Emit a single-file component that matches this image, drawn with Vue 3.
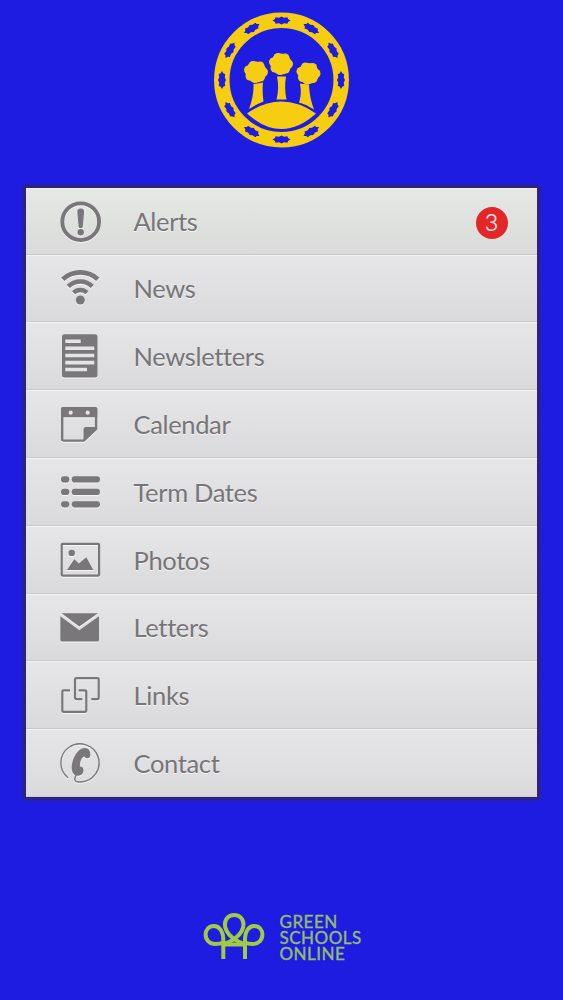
<template>
  <div class="screen">
    <header class="crest">
      <svg viewBox="0 0 136 136" width="136" height="136">
        <circle class="crest-ring" cx="67.500" cy="68" r="59.700" />
        <path
          v-for="n in 12"
          :key="n"
          class="crest-mark"
          :transform="`rotate(${n * 30} 67.5 68) translate(67.5 8.5)`"
          d="M-9 0L-6.500-1.500L-6-3.200L-2.500-2.800L0-4L2.500-2.800L6-3.200L6.500-1.500L9 0L6.500 1.500L6 3.200L2.500 2.800L0 4L-2.500 2.800L-6 3.200L-6.500 1.500z"
        />
        <g class="crest-fill">
          <path d="M33 101.500Q50 89.500 67 89.500Q85 89.500 102 101.500Q85 117 67.500 117Q50 117 33 101.500z" />
          <path d="M39.500 72L49 70.500Q48 80 49.500 89.500Q42 92.500 35 97Q40 84 39.500 72z" />
          <path d="M63 64.500H72Q70 76 72.500 87.500H62.500Q65.500 76 63 64.500z" />
          <path d="M86 71.500L95 72.500Q95.500 86 100 97.500Q93 92.500 85 90.500Q88 82 86 71.500z" />
          <g v-for="tree in trees" :key="tree.x" :transform="`translate(${tree.x} ${tree.y})`">
            <circle r="10.500" />
            <circle cx="-7.500" cy="-2" r="4.500" />
            <circle cx="-3" cy="-6.500" r="4.500" />
            <circle cx="4" cy="-6" r="4.500" />
            <circle cx="7.500" cy="0" r="4.500" />
            <circle cx="-6" cy="4" r="4.500" />
            <circle cx="4.500" cy="5" r="4.500" />
            <circle cx="-1" cy="6.500" r="4.500" />
          </g>
        </g>
      </svg>
    </header>

    <ul class="menu">
      <li v-for="item in items" :key="item.label" class="menu-item" :class="{ first: item.count }">
        <svg class="icon" viewBox="0 0 48 48" width="48" height="48">
          <g v-if="item.icon === 'alert'">
            <circle class="line" cx="24.700" cy="24.700" r="18.400" stroke-width="3.800" />
            <path d="M21.300 14.800a3.400 3.400 0 0 1 6.800 0L26.900 29a2.200 2.200 0 0 1-4.400 0z" />
            <circle cx="24.700" cy="35.300" r="3.200" />
          </g>
          <g v-else-if="item.icon === 'wifi'">
            <circle cx="24.300" cy="36" r="4.500" />
            <path class="line" stroke-width="4.800" d="M6.800 15.300a25.500 25.500 0 0 1 35 0" />
            <path class="line" stroke-width="4.600" d="M12.300 22.400a17 17 0 0 1 24 0" />
            <path class="line" stroke-width="4.400" d="M17.600 28.800a9.500 9.500 0 0 1 13.400 0" />
          </g>
          <g v-else-if="item.icon === 'page'">
            <rect x="6" y="2.200" width="35.500" height="43.200" rx="2.500" />
            <path class="cut" stroke-width="3.600" d="M9.300 9.200h15.400M9.300 16.200h29M9.300 23.500h29M9.300 30.600h29M9.300 37.500h21.700" />
          </g>
          <g v-else-if="item.icon === 'calendar'">
            <path class="line" stroke-width="2.400" d="M6.200 9v30.400a1.200 1.200 0 0 0 1.200 1.200h20.400L40.100 29V9" />
            <path d="M5 17.200V8.500q0-1.500 1.500-1.500h33.300q1.500 0 1.500 1.500v8.700z" />
            <path d="M27.500 41V29.500q0-2.500 2.500-2.500h11v2.500z" />
            <circle class="hole" cx="14.700" cy="12.700" r="2.100" />
            <circle class="hole" cx="31.700" cy="12.700" r="2.100" />
          </g>
          <g v-else-if="item.icon === 'list'">
            <template v-for="y in [8.3, 20.8, 33.2]" :key="y">
              <rect x="5" :y="y" width="8.300" height="6.200" rx="3.100" />
              <rect x="15.700" :y="y" width="28.300" height="6.200" rx="3.100" />
            </template>
          </g>
          <g v-else-if="item.icon === 'photo'">
            <rect class="line" x="5.700" y="7.900" width="37.400" height="31.700" rx="1" stroke-width="2.200" />
            <circle cx="15.700" cy="16.900" r="3.200" />
            <path d="M11 33.900L18.300 23.300L22.900 27.600L30.300 21.200L37.300 33.900z" />
          </g>
          <g v-else-if="item.icon === 'mail'">
            <path d="M5.500 10.200H42L23.300 23.600z" />
            <path d="M4.300 13.300L23.300 27.300L43 13.300V37q0 1.600-1.600 1.600H5.900Q4.300 38.600 4.300 37z" />
          </g>
          <g v-else-if="item.icon === 'links'">
            <path class="line" stroke-width="2.200" d="M26.300 28.100H20.500q-1.500 0-1.500-1.500v-18q0-1.500 1.500-1.500h20.700q1.500 0 1.500 1.500v18q0 1.500-1.500 1.500h-5.900" />
            <path class="line" stroke-width="2.200" d="M14 19.400H7.800q-1.500 0-1.500 1.500v18.400q0 1.500 1.500 1.500h21q1.500 0 1.500-1.500V20.900q0-1.500-1.500-1.500h-6.200" />
          </g>
          <g v-else>
            <path class="line" stroke-width="1.400" d="M12 38.800A19.100 19.100 0 1 1 24.500 43Q18.500 43.500 18.800 39.500L20.500 35" />
            <path d="M22 12.500C24.500 9.500 28.500 8.300 31.500 9.700C34 11 34.700 14.500 34.200 17C33.500 20 29.500 19.800 28 17.200C25 19 23.500 24 24 27.500C27.500 27.500 28.200 31 26.800 34C25.500 36.800 21.500 37.300 18.800 36C15.500 34 15.300 29 16 25C17 20 19 15.500 22 12.500z" />
          </g>
        </svg>
        <span class="label">{{ item.label }}</span>
        <span v-if="item.count" class="badge">{{ item.count }}</span>
      </li>
    </ul>

    <footer class="brand">
      <svg viewBox="0 0 62 48" width="62" height="48">
        <g class="brand-lines">
          <path d="M20.300 47V28C20.300 19 16 14 10.800 14C5.800 14 2.600 17.800 2.600 22.600C2.600 28 6.500 32 12.500 32C15.500 32 18 31.500 20.300 30.500" />
          <path d="M42 47V28C42 19 46 14 51.200 14C56.200 14 59.400 17.800 59.400 22.600C59.400 28 55.500 32 49.500 32C46.500 32 44 31.500 42 30.500" />
          <path d="M18 32C28.500 31 40.500 22 40.500 12.500C40.500 7 36.500 3 31.200 3C25.900 3 21.900 7 21.900 12.500C21.900 22 34 31 44 32" />
          <path d="M20 32.500H42" />
        </g>
      </svg>
      <div class="brand-name">
        <span>GREEN</span>
        <span>SCHOOLS</span>
        <span>ONLINE</span>
      </div>
    </footer>
  </div>
</template>

<script setup>
const items = [
  { label: "Alerts", icon: "alert", count: 3 },
  { label: "News", icon: "wifi" },
  { label: "Newsletters", icon: "page" },
  { label: "Calendar", icon: "calendar" },
  { label: "Term Dates", icon: "list" },
  { label: "Photos", icon: "photo" },
  { label: "Letters", icon: "mail" },
  { label: "Links", icon: "links" },
  { label: "Contact", icon: "phone" },
];

const trees = [
  { x: 42, y: 60 },
  { x: 67, y: 52 },
  { x: 94.5, y: 61.5 },
];
</script>

<style>
body {
  background: #1f1ce2;
}
</style>

<style scoped>
.screen {
  box-sizing: border-box;
  height: 1000px;
  padding: 12px 26px 0;
  overflow: hidden;
  background: #1f1ce2;
  font-family: Lato, sans-serif;
}

.crest {
  display: flex;
  justify-content: center;
  height: 176px;
}
.crest-ring {
  fill: none;
  stroke: #f7cd12;
  stroke-width: 15.500;
}
.crest-mark {
  fill: #1f1ce2;
}
.crest-fill {
  fill: #f7cd12;
}

.menu {
  width: 510.500px;
  margin: 0;
  padding: 0;
  list-style: none;
  border-radius: 1px;
  box-shadow: 0 0 3px 3px #30266f;
}
.menu-item {
  box-sizing: border-box;
  display: flex;
  align-items: center;
  height: 67.800px;
  padding: 0 29px 0 30px;
  border-top: 1px solid #f3f3f4;
  border-bottom: 1px solid #c9c9cb;
  background: linear-gradient(#e6e5e7, #dad9db);
}
.menu-item.first {
  height: 66.600px;
  background: linear-gradient(#e5e8e4, #dadbda);
}
.icon {
  flex: none;
  fill: #79777a;
  filter: drop-shadow(0 1px 0 #f5f5f5);
}
.line {
  fill: none;
  stroke: #79777a;
}
.cut {
  stroke: #e4e3e5;
}
.hole {
  fill: #e4e3e5;
}
.label {
  flex: 1;
  margin-left: 29.500px;
  color: #777578;
  font-size: 25.500px;
  font-variant-ligatures: none;
  line-height: 30px;
  letter-spacing: -0.350px;
  text-shadow: 0 1px 0 #f5f5f5;
}
.badge {
  width: 32px;
  height: 32px;
  margin-top: 3px;
  border-radius: 50%;
  background: #e32628;
  color: #fbe3e0;
  font: 300 23px/32px Inter, sans-serif;
  text-align: center;
}

.brand {
  display: flex;
  gap: 14.500px;
  margin: 115px 0 0 177px;
}
.brand-lines {
  fill: none;
  stroke: #a0cb45;
  stroke-width: 4;
}
.brand-name {
  display: flex;
  flex-direction: column;
  padding-top: 2px;
  color: #93bd68;
  font-size: 17px;
  line-height: 16px;
  letter-spacing: 0.500px;
  -webkit-text-stroke: 0.400px #93bd68;
}
</style>
